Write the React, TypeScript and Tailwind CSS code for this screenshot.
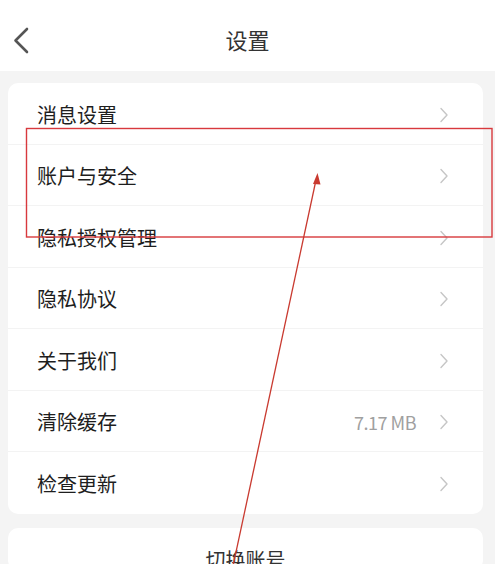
import React from 'react';

const font = { fontFamily: '"Noto Sans CJK SC", "Noto Sans", sans-serif' };

interface RowProps {
  label: string;
  value?: string;
  last?: boolean;
}

function Chevron() {
  return (
    <svg width="10" height="16" viewBox="0 0 10 16" fill="none" className="shrink-0">
      <path d="M2 1.5 L8 8 L2 14.5" stroke="#c6c6c6" strokeWidth="1.4" strokeLinecap="round" strokeLinejoin="round" />
    </svg>
  );
}

function SettingRow({ label, value, last = false }: RowProps) {
  return (
    <div className={last ? 'h-[61.5px] flex items-center pl-[29px] pr-[34px] pt-[3px]' : 'h-[61.5px] flex items-center pl-[29px] pr-[34px] pt-[3px] border-b border-[#f3f3f3]'}>
      <span className="flex-1 text-[20px] text-[#1e1e1e] leading-none">{label}</span>
      {value && <span className="text-[18px] text-[#a0a0a0] leading-none mr-[23px] tracking-[-0.5px]">{value}</span>}
      <Chevron />
    </div>
  );
}

const rows: RowProps[] = [
  { label: '消息设置' },
  { label: '账户与安全' },
  { label: '隐私授权管理' },
  { label: '隐私协议' },
  { label: '关于我们' },
  { label: '清除缓存', value: '7.17 MB' },
  { label: '检查更新', last: true },
];

export default function App() {
  return (
    <div className="relative w-[502px] h-[564px] overflow-hidden bg-white" style={font}>
      <div className="w-[495px] h-full bg-[#f4f4f4] flex flex-col">
        {/* Header */}
        <div className="relative h-[71px] bg-white flex items-center justify-center shrink-0">
          <svg width="16" height="28" viewBox="0 0 16 28" fill="none" className="absolute left-[13px] top-[27px]">
            <path d="M14 2 L2.5 13.5 L14 25" stroke="#555" strokeWidth="2.6" strokeLinecap="round" strokeLinejoin="round" />
          </svg>
          <span className="text-[22px] text-[#333] leading-none mt-[6px]">设置</span>
        </div>

        {/* Settings list */}
        <div className="mt-[12px] mx-[8px] w-[475px] bg-white rounded-[10px]">
          {rows.map((r) => (
            <SettingRow key={r.label} {...r} />
          ))}
        </div>

        {/* Switch account */}
        <div className="mt-[14px] mx-[8px] w-[475px] h-[60px] bg-white rounded-[10px] flex justify-center pt-[22px]">
          <span className="text-[20px] text-[#333] leading-none">切换账号</span>
        </div>
      </div>

      {/* Annotation overlay */}
      <svg className="absolute inset-0 pointer-events-none" width="502" height="564" viewBox="0 0 502 564">
        <rect x="26.5" y="128.5" width="465.5" height="108.5" fill="none" stroke="#d8393d" strokeWidth="1.4" />
        <line x1="233" y1="566" x2="316" y2="180" stroke="#c93a30" strokeWidth="1.3" />
        <path d="M317.5 173 L313 184 L320.5 184.5 Z" fill="#c93a30" />
      </svg>
    </div>
  );
}
